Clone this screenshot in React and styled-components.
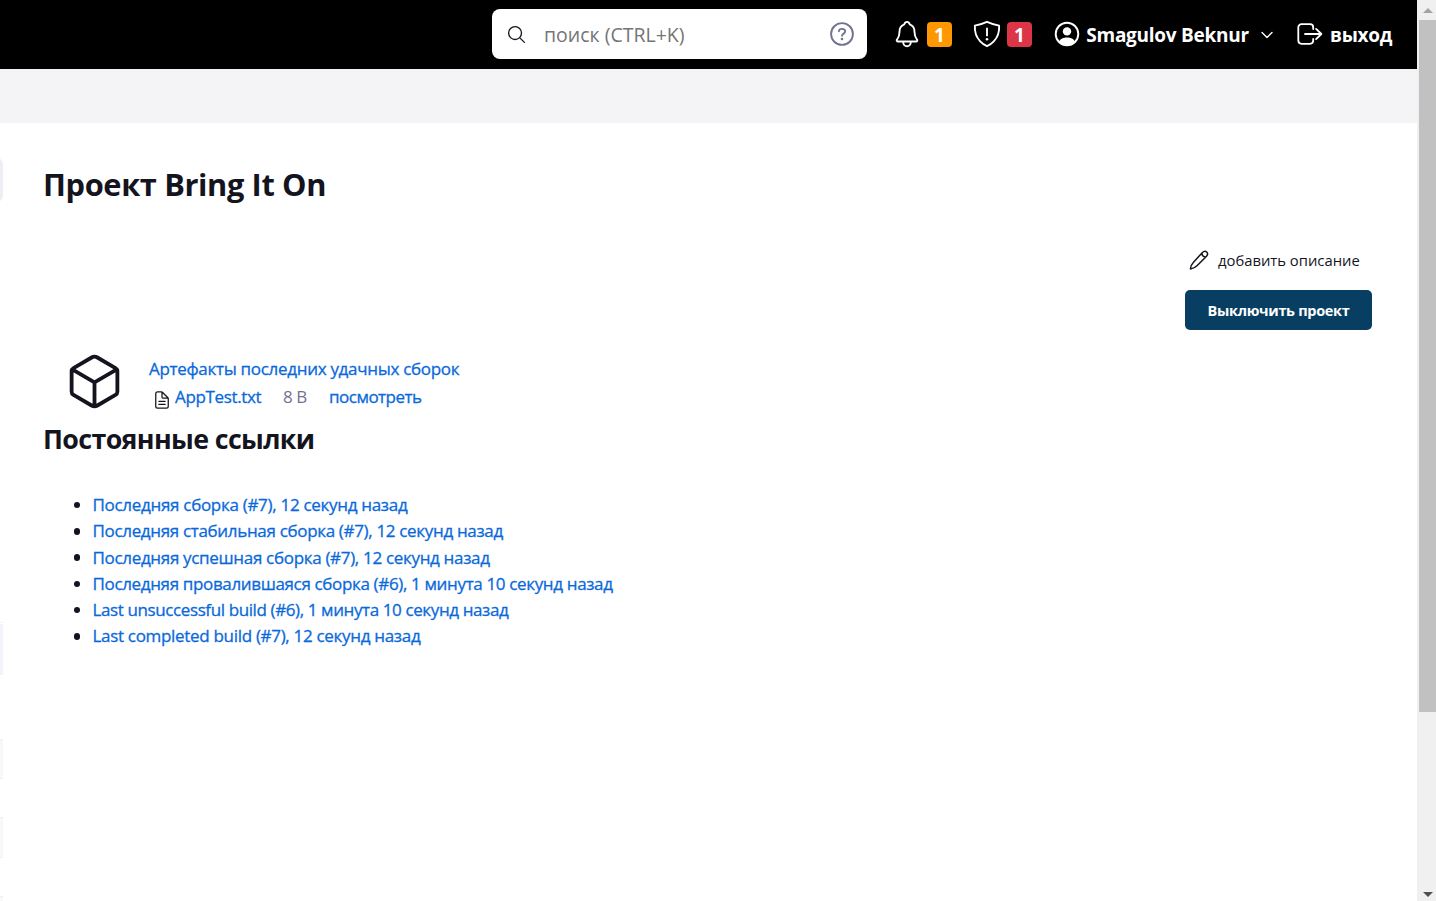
import React from "react";
import styled, { createGlobalStyle } from "styled-components";

const GlobalStyle = createGlobalStyle`
  *, *::before, *::after { box-sizing: border-box; }
  body {
    margin: 0;
    overflow: hidden;
    background: #fff;
    color: #14141f;
    font-family: "Open Sans", "Noto Sans", sans-serif;
  }
`;

const Shell = styled.div`
  display: grid;
  grid-template-columns: minmax(0, 1fr) 19px;
  height: 901px;
`;

const Page = styled.div`
  display: flex;
  flex-direction: column;
  min-width: 0;
`;

const Icon = styled.svg`
  display: block;
  flex: none;
  width: ${(p) => p.$size}px;
  height: ${(p) => p.$size}px;
  fill: none;
  stroke: currentColor;
  stroke-width: ${(p) => p.$stroke || 32};
  stroke-linecap: round;
  stroke-linejoin: round;
`;

const Header = styled.header`
  display: flex;
  justify-content: flex-end;
  align-items: center;
  height: 69px;
  padding: 0 24px 1px 0;
  background: #000;
  color: #fff;
`;

const SearchBox = styled.label`
  display: flex;
  align-items: center;
  width: 375px;
  height: 50px;
  padding: 0 12.5px 0 14px;
  margin-right: 25px;
  border-radius: 8px;
  background: #fff;
  color: #14141f;
`;

const SearchHint = styled.span`
  flex: 1;
  margin-left: 17px;
  padding-top: 2px;
  color: #757575;
  font-size: 19.5px;
  line-height: 30px;
  white-space: nowrap;
`;

const HelpMark = styled.span`
  color: #737391;
`;

const HeaderItem = styled.a`
  display: flex;
  align-items: center;
  flex: none;
  width: ${(p) => p.$width}px;
  height: 50px;
  padding-left: ${(p) => p.$inset || 0}px;
  color: inherit;
`;

const Badge = styled.span`
  width: 25px;
  height: 25px;
  margin: 1px 0 0 5px;
  border-radius: 4px;
  background: ${(p) => p.$color};
  font-size: 19px;
  font-weight: 700;
  line-height: 26px;
  text-align: center;
`;

const HeaderLabel = styled.span`
  margin-left: ${(p) => p.$gap}px;
  padding-top: 2px;
  font-size: 19px;
  font-weight: 700;
  line-height: 28px;
  letter-spacing: ${(p) => p.$track || 0}px;
  white-space: nowrap;
`;

const Chevron = styled.span`
  margin-left: auto;
  margin-right: 0.5px;
  padding-top: 1px;
`;

const Breadcrumbs = styled.nav`
  height: 54px;
  background: #f4f4f7;
`;

const Body = styled.div`
  display: flex;
  flex: 1;
  min-height: 0;
`;

const SidePanel = styled.aside`
  display: flex;
  flex-direction: column;
  width: 3px;
  height: 778px;
  overflow: hidden;
`;

const SideBlock = styled.div`
  flex: none;
  align-self: flex-end;
  width: 24px;
  height: ${(p) => p.$height}px;
  margin-top: ${(p) => p.$gap}px;
  border-radius: ${(p) => p.$radius || 0}px;
  border-top: ${(p) => (p.$edge ? "1px solid #f0f0f2" : "0")};
  border-bottom: ${(p) => (p.$edge ? "1px solid #f0f0f2" : "0")};
  background: ${(p) => p.$color};
`;

const Main = styled.main`
  flex: 1;
  display: flex;
  flex-direction: column;
  padding: 37px 45px 0 40px;
`;

const Title = styled.h1`
  margin: 0;
  font-size: 30.8px;
  font-weight: 700;
  line-height: 48px;
  letter-spacing: -0.38px;
  white-space: nowrap;
`;

const Actions = styled.div`
  display: flex;
  flex-direction: column;
  align-items: flex-end;
  gap: 10px;
  margin-top: 32px;
`;

const DescriptionLink = styled.a`
  display: flex;
  align-items: center;
  gap: 9px;
  width: 183px;
  height: 40px;
`;

const DescriptionText = styled.span`
  font-size: 14.8px;
  line-height: 22px;
  white-space: nowrap;
`;

const PrimaryButton = styled.button`
  width: 187px;
  height: 40px;
  padding: 1px 0 0;
  border: 0;
  border-radius: 5px;
  background: #073e61;
  color: #fff;
  font: 700 14.5px "Open Sans", "Noto Sans", sans-serif;
  letter-spacing: -0.32px;
  white-space: nowrap;
`;

const Artifacts = styled.section`
  display: flex;
  gap: 24.5px;
  margin-top: 20.5px;
  padding-left: 20.5px;
`;

const ArtifactInfo = styled.div`
  padding-top: 5.5px;
`;

const Link = styled.a`
  color: #0969da;
  font-size: 17px;
  line-height: 26.25px;
  letter-spacing: ${(p) => p.$track || 0}px;
  white-space: nowrap;
  -webkit-text-stroke: 0.3px currentColor;
`;

const FileRow = styled.div`
  display: grid;
  grid-template-columns: 23px 108px 46px auto;
  align-items: center;
  height: 28px;
  padding-left: 3px;
  margin-top: 1px;
`;

const FileIcon = styled.span`
  padding-top: 5px;
`;

const FileSize = styled.span`
  padding-bottom: 1px;
  color: #737391;
  font-size: 17px;
  letter-spacing: -0.4px;
`;

const Subtitle = styled.h2`
  margin: 6.5px 0 0;
  font-size: 26.8px;
  font-weight: 700;
  line-height: 42px;
  letter-spacing: -0.63px;
  white-space: nowrap;
`;

const LinkList = styled.ul`
  display: flex;
  flex-direction: column;
  margin: 32px 0 0;
  padding: 0 0 0 30.5px;
  list-style: none;
`;

const LinkItem = styled.li`
  display: flex;
  align-items: center;
  height: 26.25px;

  &::before {
    content: "";
    width: 6.5px;
    height: 6.5px;
    margin-right: 12.5px;
    border-radius: 50%;
    background: #14141f;
  }
`;

const ScrollTrack = styled.div`
  display: flex;
  flex-direction: column;
  padding-left: 2px;
  background: #f0f0f0;
`;

const ScrollArrow = styled.div`
  display: flex;
  align-items: center;
  justify-content: center;
  height: ${(p) => p.$height}px;
  margin-top: ${(p) => (p.$end ? "auto" : 0)};

  &::before {
    content: "";
    border: 5px solid transparent;
    border-width: ${(p) => (p.$end ? "5px 5px 0" : "0 5px 5px")};
    border-top-color: ${(p) => (p.$end ? "#505050" : "transparent")};
    border-bottom-color: ${(p) => (p.$end ? "transparent" : "#a3a3a3")};
  }
`;

const ScrollThumb = styled.div`
  height: 692px;
  background: #c1c1c1;
`;

const BellIcon = () => (
  <Icon $size={30} viewBox="0 0 512 512">
    <path d="M427.68 351.43C402 320 383.87 304 383.87 217.35 383.87 138 343.35 109.73 310 96c-4.43-1.82-8.6-6-9.95-10.55C294.2 65.54 277.8 48 256 48s-38.21 17.55-44 37.47c-1.35 4.6-5.52 8.71-9.95 10.53-33.39 13.75-73.87 41.92-73.87 121.35C128.13 304 110 320 84.32 351.43 73.68 364.45 83 384 101.61 384h308.88c18.51 0 27.77-19.61 17.19-32.57zM320 384v16a64 64 0 01-128 0v-16" />
  </Icon>
);

const ShieldIcon = () => (
  <Icon $size={30} viewBox="0 0 512 512">
    <path d="M463.1 112.37C373.68 96.33 336.71 84.45 256 48c-80.71 36.45-117.68 48.33-207.1 64.37C32.7 369.13 240.58 457.79 256 464c15.42-6.21 223.3-94.87 207.1-351.63z" />
    <path d="M256 160v120" />
    <circle cx="256" cy="346" r="22" fill="currentColor" stroke="none" />
  </Icon>
);

const PersonIcon = () => (
  <Icon $size={26} viewBox="0 0 26 26" $stroke={1.9}>
    <circle cx="13" cy="13" r="11.3" />
    <circle cx="13" cy="10.4" r="4.2" fill="currentColor" stroke="none" />
    <path d="M5 20.6C6.2 17.5 9.6 16.4 13 16.4s6.8 1.1 8 4.2A11 11 0 0 1 13 24a11 11 0 0 1-8-3.4z" fill="currentColor" stroke="none" />
  </Icon>
);

const ExitIcon = () => (
  <Icon $size={26} viewBox="0 0 26 26" $stroke={1.8}>
    <path d="M16.2 8V6.4a3.2 3.2 0 0 0-3.2-3.2H4.5a3.2 3.2 0 0 0-3.2 3.2v13.2a3.2 3.2 0 0 0 3.2 3.2H13a3.2 3.2 0 0 0 3.2-3.2V18" />
    <path d="M8 13h16.4M19.1 7.9l5.3 5.1-5.3 5.1" />
  </Icon>
);

const PencilIcon = () => (
  <Icon $size={20} viewBox="0 0 20 20" $stroke={1.5}>
    <path d="M13.2 2.7C14.7 1.2 16.3.7 17.7 2c1.3 1.3 1 3-.4 4.5L8 15.8c-1.6 1.6-3.5 2.7-6.6 3.2.4-3.1 1.5-5.1 3.1-6.7zM12.8 3.1C13 5.4 14.5 7 16.9 7" />
  </Icon>
);

const builds = [
  ["Последняя сборка (#7), 12 секунд назад", -0.3],
  ["Последняя стабильная сборка (#7), 12 секунд назад", -0.33],
  ["Последняя успешная сборка (#7), 12 секунд назад", -0.32],
  ["Последняя провалившаяся сборка (#6), 1 минута 10 секунд назад", -0.35],
  ["Last unsuccessful build (#6), 1 минута 10 секунд назад", -0.39],
  ["Last completed build (#7), 12 секунд назад", -0.31],
];

export default function App() {
  return (
    <Shell>
      <GlobalStyle />
      <Page>
        <Header>
          <SearchBox>
            <Icon $size={21} viewBox="0 0 512 512">
              <path d="M221.09 64a157.09 157.09 0 10157.09 157.09A157.1 157.1 0 00221.09 64zM338.29 338.29L448 448" />
            </Icon>
            <SearchHint>поиск (CTRL+K)</SearchHint>
            <HelpMark>
              <Icon $size={26} viewBox="0 0 26 26" $stroke={1.9}>
                <circle cx="13" cy="13" r="10.9" />
                <path d="M9.9 10.2C10.1 8.6 11.4 7.9 13 7.9c1.8 0 3.2 1 3.2 2.6 0 2.1-3.2 2.2-3.2 4.3" />
                <circle cx="13" cy="18" r="1.3" fill="currentColor" stroke="none" />
              </Icon>
            </HelpMark>
          </SearchBox>
          <HeaderItem $width={80}>
            <BellIcon />
            <Badge $color="#ff9800">1</Badge>
          </HeaderItem>
          <HeaderItem $width={82}>
            <ShieldIcon />
            <Badge $color="#dc3545">1</Badge>
          </HeaderItem>
          <HeaderItem $width={219}>
            <PersonIcon />
            <HeaderLabel $gap={6.3} $track={-0.27}>Smagulov Beknur</HeaderLabel>
            <Chevron>
              <Icon $size={12} viewBox="0 0 12 12" $stroke={1.4}>
                <path d="M1 3.5l5 5 5-5" />
              </Icon>
            </Chevron>
          </HeaderItem>
          <HeaderItem $width={120} $inset={24}>
            <ExitIcon />
            <HeaderLabel $gap={7} $track={-0.25}>выход</HeaderLabel>
          </HeaderItem>
        </Header>
        <Breadcrumbs />
        <Body>
          <SidePanel>
            <SideBlock $gap={34} $height={46} $radius={8} $color="#eeeef5" />
            <SideBlock $gap={419} $height={1} $color="#f3f3fa" />
            <SideBlock $gap={1} $height={51} $color="#f3f3fa" />
            <SideBlock $gap={64} $height={40} $color="#f8f8f8" $edge />
            <SideBlock $gap={38} $height={41} $color="#f8f8f8" $edge />
            <SideBlock $gap={38} $height={10} $color="#f8f8f8" $edge />
          </SidePanel>
          <Main>
            <Title>Проект Bring It On</Title>
            <Actions>
              <DescriptionLink>
                <PencilIcon />
                <DescriptionText>добавить описание</DescriptionText>
              </DescriptionLink>
              <PrimaryButton>Выключить проект</PrimaryButton>
            </Actions>
            <Artifacts>
              <Icon $size={61} viewBox="0 0 512 512">
                <path d="M448 341.37V170.61A32 32 0 00432.11 143l-152-88.46a47.94 47.94 0 00-48.24 0L79.89 143A32 32 0 0064 170.61v170.76A32 32 0 0079.89 369l152 88.46a48 48 0 0048.24 0l152-88.46A32 32 0 00448 341.37zM69 153.99l187 110 187-110M256 463.99v-200" />
              </Icon>
              <ArtifactInfo>
                <Link $track={-0.3}>Артефакты последних удачных сборок</Link>
                <FileRow>
                  <FileIcon>
                    <Icon $size={20} viewBox="0 0 512 512">
                      <path d="M416 221.25V416a48 48 0 01-48 48H144a48 48 0 01-48-48V96a48 48 0 0148-48h98.75a32 32 0 0122.62 9.37l141.26 141.26a32 32 0 019.37 22.62zM256 56v120a32 32 0 0032 32h120M176 288h160M176 368h160" />
                    </Icon>
                  </FileIcon>
                  <Link $track={-0.35}>AppTest.txt</Link>
                  <FileSize>8 B</FileSize>
                  <Link $track={-0.5}>посмотреть</Link>
                </FileRow>
              </ArtifactInfo>
            </Artifacts>
            <Subtitle>Постоянные ссылки</Subtitle>
            <LinkList>
              {builds.map(([text, track]) => (
                <LinkItem key={text}>
                  <Link $track={track}>{text}</Link>
                </LinkItem>
              ))}
            </LinkList>
          </Main>
        </Body>
      </Page>
      <ScrollTrack>
        <ScrollArrow $height={20} />
        <ScrollThumb />
        <ScrollArrow $height={14} $end />
      </ScrollTrack>
    </Shell>
  );
}
